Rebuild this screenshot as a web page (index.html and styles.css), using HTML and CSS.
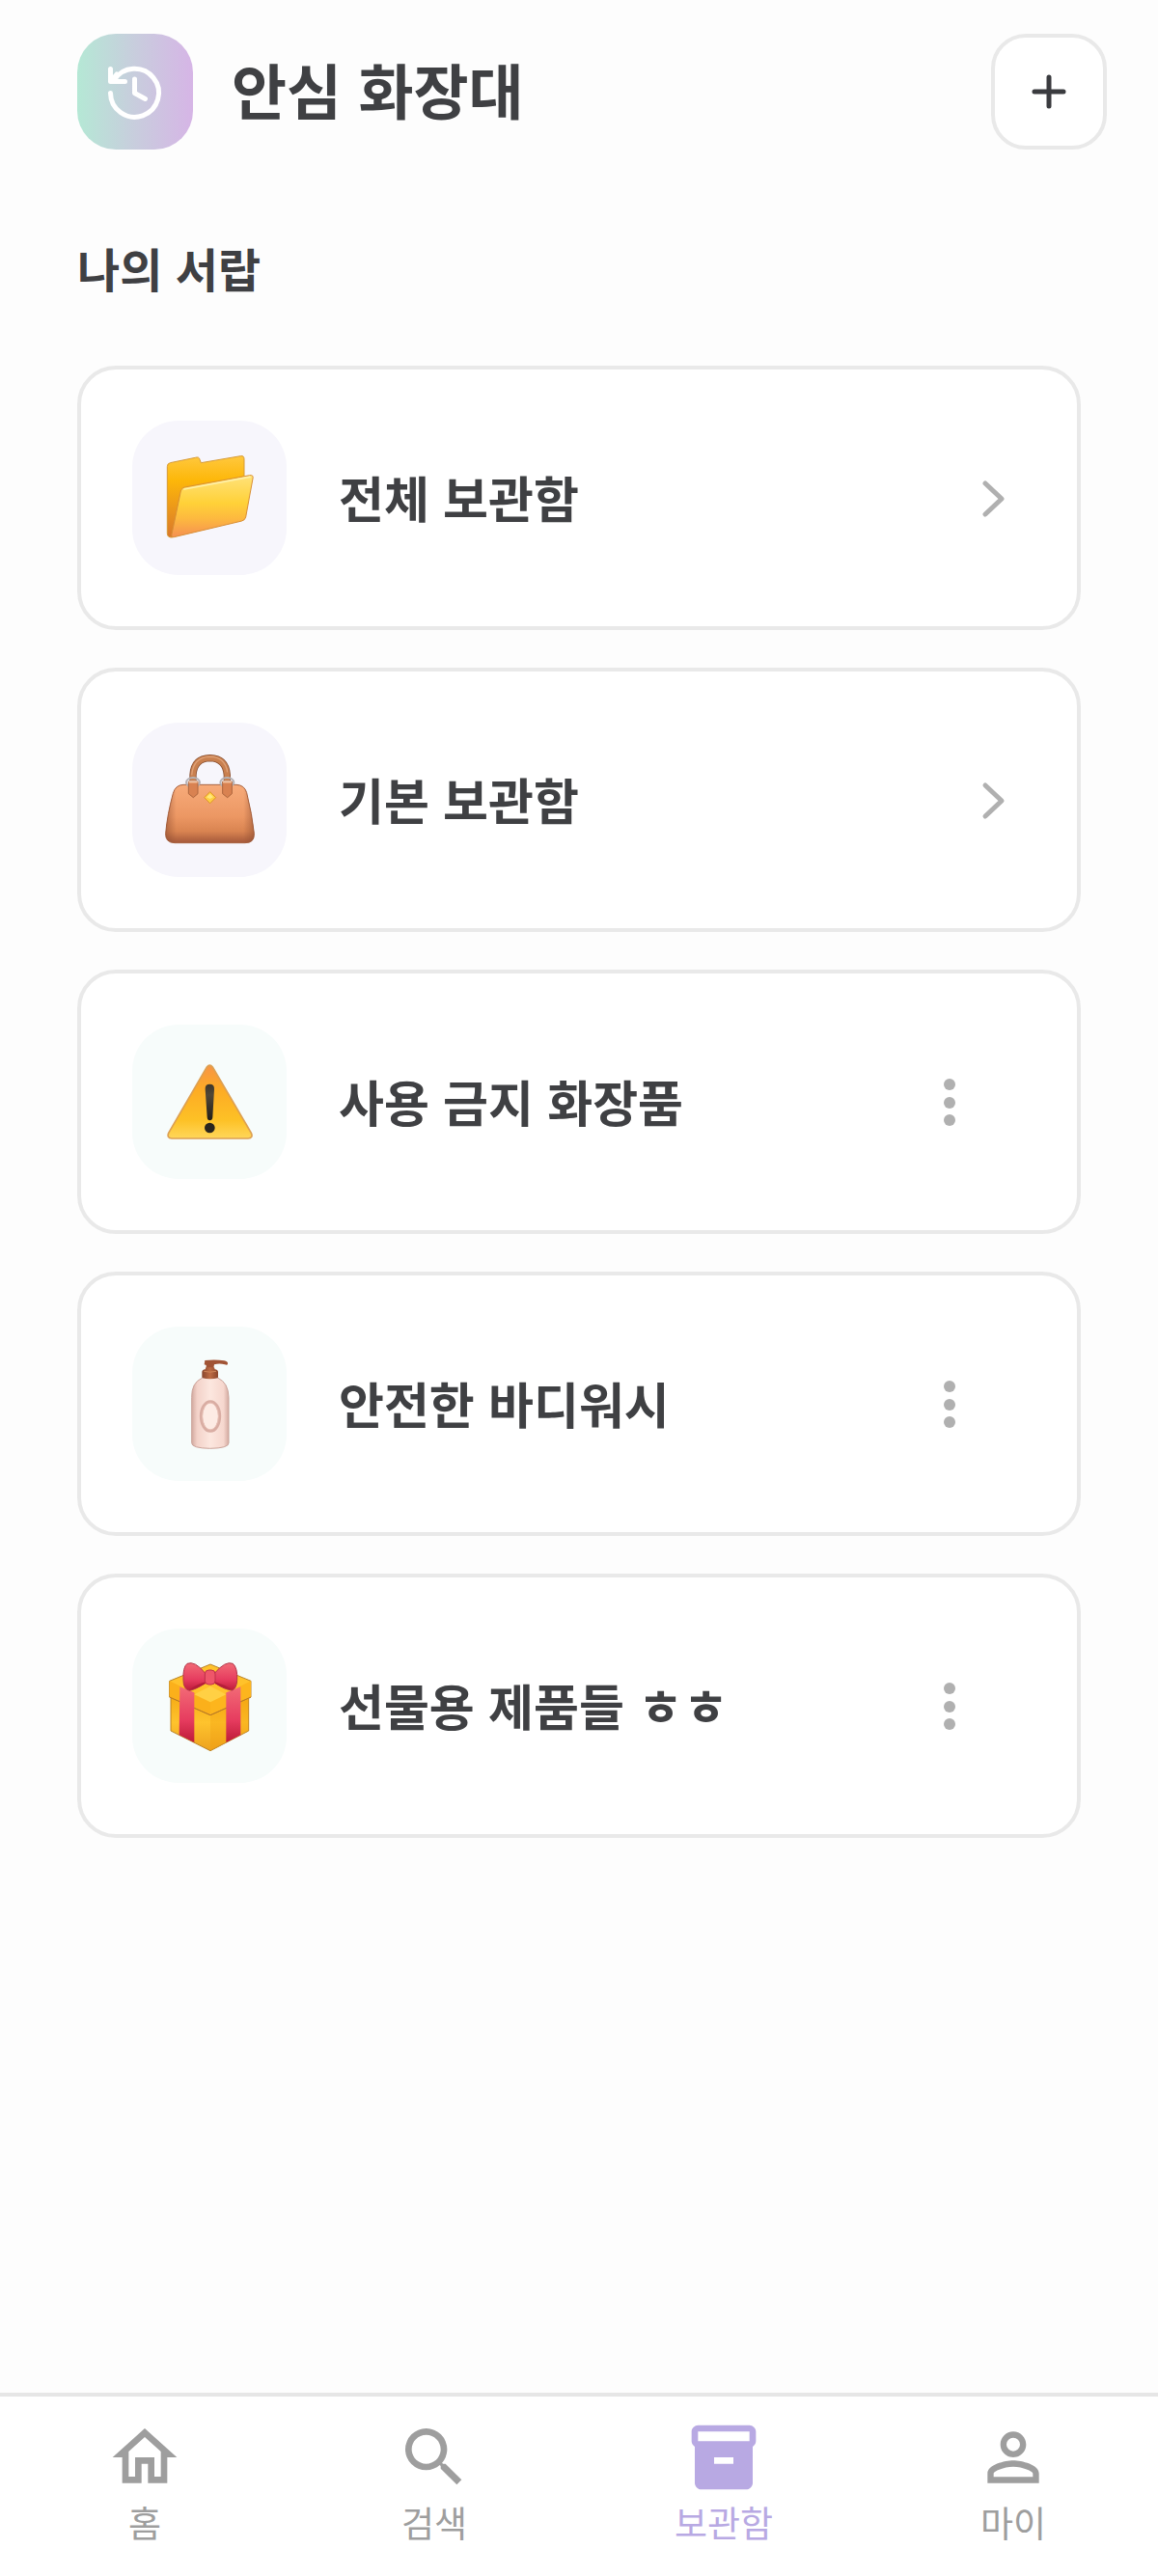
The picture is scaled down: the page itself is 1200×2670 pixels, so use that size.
FILE: index.html
```html
<!DOCTYPE html>
<html lang="ko">
<head>
    <meta charset="UTF-8">
    <meta name="viewport" content="width=device-width, initial-scale=1.0">
    <title>안심 화장대</title>
    <link rel="stylesheet" href="styles.css">
</head>
<body>
    <header class="header">
        <button class="history-button" type="button" aria-label="기록">
            <svg width="72" height="72" viewBox="0 0 72 72" fill="none" stroke="#fff" stroke-width="5" stroke-linecap="round" stroke-linejoin="round">
                <path d="M10.5 37.5A25 25 0 1 0 14.3 24"/>
                <path d="M10.5 12.5V25.5H25.5M12 24l5-6"/>
                <path d="M35.5 23V37.5L46.5 43.5"/>
            </svg>
        </button>
        <h1 class="title">안심 화장대</h1>
        <button class="add-button" type="button" aria-label="추가">
            <svg width="36" height="36" viewBox="0 0 36 36" fill="none" stroke="#3a3b3f" stroke-width="5" stroke-linecap="round">
                <path d="M18 3v30M3 18h30"/>
            </svg>
        </button>
    </header>

    <main class="content">
        <h2 class="section-title">나의 서랍</h2>
        <ul class="drawer-list">
            <li class="card">
                <a class="card-link" href="#all">
                    <span class="card-icon">
                        <svg viewBox="0 0 480 480">
                            <defs>
                                <linearGradient id="folder-back" x1="0" y1="0" x2="0" y2="1">
                                    <stop offset="0" stop-color="#ffc83e"/>
                                    <stop offset=".3" stop-color="#fdb709"/>
                                    <stop offset="1" stop-color="#d9772c"/>
                                </linearGradient>
                                <linearGradient id="folder-front" x1="0" y1="0" x2="0" y2="1">
                                    <stop offset="0" stop-color="#ffe27a"/>
                                    <stop offset=".45" stop-color="#ffd138"/>
                                    <stop offset=".7" stop-color="#fdb93f"/>
                                    <stop offset="1" stop-color="#f59052"/>
                                </linearGradient>
                            </defs>
                            <path d="M118 131L196 115Q208 111 210 121L214 131L337 110Q348 108 348 120V230L124 363Q109 364 109 350V143Q109 133 118 131Z" fill="url(#folder-back)" stroke="#d79a35" stroke-width="3"/>
                            <path d="M163 207L365 170Q378 168 375 180L353 300Q351 309 341 312L130 362Q121 364 123 353L151 219Q153 209 163 207Z" fill="url(#folder-front)" stroke="#d98f35" stroke-width="3"/>
                            <path d="M162 213L366 175" fill="none" stroke="#fff0a8" stroke-width="5" stroke-linecap="round"/>
                        </svg>
                    </span>
                    <span class="card-name">전체 보관함</span>
                    <svg class="chevron" width="66" height="66" viewBox="0 0 66 66" fill="none" stroke="#b0b0b0" stroke-width="5" stroke-linecap="round" stroke-linejoin="round">
                        <path d="M24 18L41 34L24 50"/>
                    </svg>
                </a>
            </li>
            <li class="card">
                <a class="card-link" href="#basic">
                    <span class="card-icon">
                        <svg viewBox="21 24 480 480">
                            <defs>
                                <linearGradient id="bag-body" x1="0" y1="0" x2="0" y2="1">
                                    <stop offset="0" stop-color="#f7ab7a"/>
                                    <stop offset=".55" stop-color="#ec9763"/>
                                    <stop offset=".8" stop-color="#d98451"/>
                                    <stop offset="1" stop-color="#a4583a"/>
                                </linearGradient>
                                <linearGradient id="bag-side" x1="0" y1="0" x2="1" y2="0">
                                    <stop offset="0" stop-color="#8a4a30" stop-opacity=".5"/>
                                    <stop offset=".12" stop-color="#8a4a30" stop-opacity="0"/>
                                    <stop offset=".88" stop-color="#8a4a30" stop-opacity="0"/>
                                    <stop offset="1" stop-color="#8a4a30" stop-opacity=".5"/>
                                </linearGradient>
                            </defs>
                            <path d="M180 217H345Q370 218 377 242Q394 310 400 368Q402 398 372 398H153Q123 397 125 368Q130 310 148 244Q155 218 180 217Z" fill="url(#bag-body)" stroke="#a8623f" stroke-width="3"/>
                            <path d="M180 217H345Q370 218 377 242Q394 310 400 368Q402 398 372 398H153Q123 397 125 368Q130 310 148 244Q155 218 180 217Z" fill="url(#bag-side)"/>
                            <path d="M210 204V187Q213 135 263 134Q312 135 316 187V204" fill="none" stroke="#8b5234" stroke-width="22"/>
                            <path d="M210 204V187Q213 135 263 134Q312 135 316 187V204" fill="none" stroke="#c9804f" stroke-width="17"/>
                            <path d="M206 187Q211 131 263 130Q310 131 317 178" fill="none" stroke="#dfa177" stroke-width="4"/>
                            <g fill="none" stroke="#b5b2b5" stroke-width="6">
                                <ellipse cx="210" cy="210" rx="21" ry="15"/>
                                <ellipse cx="316" cy="210" rx="21" ry="15"/>
                            </g>
                            <g fill="#d98251" stroke="#ad663e" stroke-width="3">
                                <path d="M196 207H225V245L211 257L196 245Z"/>
                                <path d="M302 207H331V245L317 257L302 245Z"/>
                            </g>
                            <path d="M197 209H224M303 209H330" stroke="#f2c09b" stroke-width="5"/>
                            <path d="M263 239L281 257L263 275L245 257Z" fill="#ffce43" stroke="#dc9428" stroke-width="3" stroke-linejoin="round"/>
                            <path d="M263 245L273 256L263 261L252 256Z" fill="#ffe77c"/>
                        </svg>
                    </span>
                    <span class="card-name">기본 보관함</span>
                    <svg class="chevron" width="66" height="66" viewBox="0 0 66 66" fill="none" stroke="#b0b0b0" stroke-width="5" stroke-linecap="round" stroke-linejoin="round">
                        <path d="M24 18L41 34L24 50"/>
                    </svg>
                </a>
            </li>
            <li class="card">
                <a class="card-link" href="#banned">
                    <span class="card-icon mint">
                        <svg viewBox="21 21 480 480">
                            <defs>
                                <linearGradient id="warning" x1="0" y1="0" x2="0" y2="1">
                                    <stop offset="0" stop-color="#f79545"/>
                                    <stop offset=".35" stop-color="#fdac24"/>
                                    <stop offset=".75" stop-color="#fdc126"/>
                                    <stop offset="1" stop-color="#ffd75a"/>
                                </linearGradient>
                                <linearGradient id="mark" x1="0" y1="0" x2="0" y2="1">
                                    <stop offset="0" stop-color="#3c352b"/>
                                    <stop offset=".3" stop-color="#514737"/>
                                    <stop offset="1" stop-color="#211e19"/>
                                </linearGradient>
                            </defs>
                            <path d="M253 153Q262 142 271 153L391 358Q398 374 381 375H144Q128 374 134 358Z" fill="url(#warning)" stroke="#dda052" stroke-width="5"/>
                            <path d="M248 222Q247 206 262 206Q277 206 276 222L271 309Q270 319 262 319Q255 319 254 309Z" fill="url(#mark)"/>
                            <circle cx="262" cy="342" r="16" fill="#29251e"/>
                        </svg>
                    </span>
                    <span class="card-name">사용 금지 화장품</span>
                </a>
                <button class="more-button" type="button" aria-label="사용 금지 화장품 메뉴">
                    <svg width="48" height="50" viewBox="0 0 48 50" fill="#b0b0b0">
                        <circle cx="24" cy="7" r="6"/><circle cx="24" cy="26" r="6"/><circle cx="24" cy="44" r="6"/>
                    </svg>
                </button>
            </li>
            <li class="card">
                <a class="card-link" href="#bodywash">
                    <span class="card-icon mint">
                        <svg viewBox="21 24 480 480">
                            <defs>
                                <linearGradient id="bottle" x1="0" y1="0" x2="1" y2="0">
                                    <stop offset="0" stop-color="#d3aaa0"/>
                                    <stop offset=".15" stop-color="#f3d2c9"/>
                                    <stop offset=".5" stop-color="#fce7df"/>
                                    <stop offset=".86" stop-color="#f6d7ce"/>
                                    <stop offset="1" stop-color="#d4aca2"/>
                                </linearGradient>
                                <linearGradient id="cap" x1="0" y1="0" x2="1" y2="0">
                                    <stop offset="0" stop-color="#87452d"/>
                                    <stop offset=".5" stop-color="#bd6b44"/>
                                    <stop offset="1" stop-color="#8b452b"/>
                                </linearGradient>
                            </defs>
                            <path d="M238 184Q205 199 206 244V386Q206 402 263 403Q321 402 321 386V244Q320 199 288 184Z" fill="url(#bottle)" stroke="#cba39a" stroke-width="3"/>
                            <path d="M247 129Q282 126 307 130Q319 132 318 140Q317 145 309 142Q292 137 276 142L274 153H251V144L245 142Z" fill="#a15435"/>
                            <path d="M250 151H276L278 157Q288 158 288 166V182Q263 191 238 182V166Q238 158 248 157Z" fill="url(#cap)"/>
                            <path d="M244 163Q263 168 282 163" fill="none" stroke="#d08659" stroke-width="3"/>
                            <ellipse cx="264" cy="303" rx="29" ry="46" fill="#fdebe4" stroke="#d9ada3" stroke-width="9"/>
                            <ellipse cx="264" cy="303" rx="25" ry="42" fill="none" stroke="#e8c0b5" stroke-width="3"/>
                        </svg>
                    </span>
                    <span class="card-name">안전한 바디워시</span>
                </a>
                <button class="more-button" type="button" aria-label="안전한 바디워시 메뉴">
                    <svg width="48" height="50" viewBox="0 0 48 50" fill="#b0b0b0">
                        <circle cx="24" cy="7" r="6"/><circle cx="24" cy="26" r="6"/><circle cx="24" cy="44" r="6"/>
                    </svg>
                </button>
            </li>
            <li class="card">
                <a class="card-link" href="#gift">
                    <span class="card-icon mint">
                        <svg viewBox="21 21 480 480">
                            <defs>
                                <linearGradient id="box" x1="0" y1="0" x2="0" y2="1">
                                    <stop offset="0" stop-color="#f5a915"/>
                                    <stop offset=".5" stop-color="#fec32d"/>
                                    <stop offset="1" stop-color="#eda21e"/>
                                </linearGradient>
                                <linearGradient id="ribbon" x1="0" y1="0" x2="0" y2="1">
                                    <stop offset="0" stop-color="#f26a76"/>
                                    <stop offset=".6" stop-color="#e63c5f"/>
                                    <stop offset="1" stop-color="#bd1a38"/>
                                </linearGradient>
                            </defs>
                            <path d="M141 225L264 270L383 225V339L264 401L141 339Z" fill="url(#box)" stroke="#b98328" stroke-width="3" stroke-linejoin="round"/>
                            <path d="M264 282L383 238V339L264 401Z" fill="#f39c0b" opacity=".3"/>
                            <path d="M137 184L264 132L390 184V234L264 290L137 234Z" fill="#ffc22b" stroke="#b98328" stroke-width="3" stroke-linejoin="round"/>
                            <path d="M137 184L264 246V288L137 234Z" fill="#fbb01b"/>
                            <path d="M264 246L390 184V234L264 288Z" fill="#fdb51d"/>
                            <path d="M214 226L264 200L313 226L264 250Z" fill="#ffd044"/>
                            <path d="M137 234L264 290L390 234" fill="none" stroke="#ba7824" stroke-width="3"/>
                            <path d="M169 202L214 220V375L167 352ZM313 220L358 202V352L313 375Z" fill="url(#ribbon)"/>
                            <path d="M248 160Q216 120 192 130Q178 141 180 181Q180 210 199 214Q219 210 249 190ZM277 160Q311 120 334 130Q349 143 347 181Q346 208 331 213Q309 211 278 190Z" fill="url(#ribbon)" stroke="#b23548" stroke-width="3"/>
                            <path d="M249 187Q219 195 198 212Q218 210 249 192ZM278 187Q309 196 332 211Q307 209 278 192Z" fill="#b51e3a"/>
                            <rect x="247" y="150" width="32" height="45" rx="12" fill="#ef5669" stroke="#bf3048" stroke-width="3"/>
                        </svg>
                    </span>
                    <span class="card-name">선물용 제품들 ㅎㅎ</span>
                </a>
                <button class="more-button" type="button" aria-label="선물용 제품들 메뉴">
                    <svg width="48" height="50" viewBox="0 0 48 50" fill="#b0b0b0">
                        <circle cx="24" cy="7" r="6"/><circle cx="24" cy="26" r="6"/><circle cx="24" cy="44" r="6"/>
                    </svg>
                </button>
            </li>
        </ul>
    </main>

    <nav class="tab-bar">
        <a class="tab" href="#home">
            <svg viewBox="0 0 24 24"><path d="M12 5.69l5 4.5V18h-2v-6H9v6H7v-7.81l5-4.5M12 3L2 12h3v8h6v-6h2v6h6v-8h3L12 3z"/></svg>
            <span>홈</span>
        </a>
        <a class="tab" href="#search">
            <svg viewBox="0 0 24 24"><path d="M15.5 14h-.79l-.28-.27A6.471 6.471 0 0 0 16 9.5 6.5 6.5 0 1 0 9.5 16c1.61 0 3.09-.59 4.23-1.57l.27.28v.79l5 4.99L20.49 19l-4.99-5zm-6 0C7.01 14 5 11.99 5 9.5S7.01 5 9.5 5 14 7.01 14 9.5 11.99 14 9.5 14z"/></svg>
            <span>검색</span>
        </a>
        <a class="tab active" href="#storage" aria-current="page">
            <svg viewBox="0 0 24 24"><path d="M20 2H4c-1 0-2 .9-2 2v3.01c0 .72.43 1.34 1 1.69V20c0 1.1 1.1 2 2 2h14c.9 0 2-.9 2-2V8.7c.57-.35 1-.97 1-1.69V4c0-1.1-1-2-2-2zm-5 12H9v-2h6v2zm5-7H4V4h16v3z" fill-rule="evenodd"/></svg>
            <span>보관함</span>
        </a>
        <a class="tab" href="#my">
            <svg viewBox="0 0 24 24"><path d="M12 5.9a2.1 2.1 0 1 1 0 4.2 2.1 2.1 0 0 1 0-4.2m0 9c2.97 0 6.1 1.46 6.1 2.1v1.1H5.9V17c0-.64 3.13-2.1 6.1-2.1M12 4C9.79 4 8 5.79 8 8s1.79 4 4 4 4-1.79 4-4-1.79-4-4-4zm0 9c-2.67 0-8 1.34-8 4v3h16v-3c0-2.66-5.33-4-8-4z"/></svg>
            <span>마이</span>
        </a>
    </nav>
</body>
</html>
```

FILE: styles.css
```css
* {
    box-sizing: border-box;
}

body {
    font-family: "Noto Sans CJK KR", "Noto Sans", sans-serif;
    display: flex;
    flex-direction: column;
    min-height: 100vh;
    background-color: #fdfdfd;
    color: #3f4043;
    margin: 0;
}

button {
    border: none;
    padding: 0;
    background: none;
    cursor: pointer;
}

a {
    color: inherit;
    text-decoration: none;
}

svg {
    display: block;
}

.header {
    display: flex;
    align-items: center;
    gap: 40px;
    padding: 35px 53px 0 80px;
}

.history-button,
.add-button {
    display: flex;
    justify-content: center;
    align-items: center;
    flex-shrink: 0;
    width: 120px;
    height: 120px;
    border-radius: 40px;
}

.history-button {
    background: linear-gradient(90deg, #b5e8d5, #c8cddd 50%, #d6b5e6);
}

.add-button {
    background: #fff;
    border: 4px solid #e9e9e9;
    border-radius: 36px;
}

.title {
    flex: 1;
    font-size: 62px;
    line-height: 80px;
    font-weight: 700;
    margin: 0;
    padding-bottom: 6px;
}

.content {
    flex: 1;
    padding: 90px 80px 40px;
}

.section-title {
    font-size: 48px;
    line-height: 64px;
    font-weight: 700;
    margin: 0 0 70px;
}

.drawer-list {
    display: flex;
    flex-direction: column;
    gap: 39px;
    list-style: none;
    margin: 0;
    padding: 0;
}

.card {
    display: flex;
    align-items: center;
    background: #fff;
    border: 4px solid #e9e9e9;
    border-radius: 40px;
    padding: 53px;
}

.card-link {
    display: flex;
    flex: 1;
    align-items: center;
    gap: 54px;
}

.card-icon {
    flex-shrink: 0;
    width: 160px;
    height: 160px;
    border-radius: 48px;
    background: #f7f6fc;
}

.card-icon.mint {
    background: #f7fcfb;
}

.card-name {
    flex: 1;
    font-size: 51px;
    line-height: 64px;
    font-weight: 700;
    padding-bottom: 2px;
}

.more-button {
    display: flex;
    justify-content: center;
    align-items: center;
    width: 80px;
    height: 80px;
    margin-right: 39px;
}

.tab-bar {
    position: sticky;
    bottom: 0;
    display: flex;
    background: #fff;
    border-top: 4px solid #e6e6e6;
}

.tab {
    display: flex;
    flex: 1;
    flex-direction: column;
    align-items: center;
    height: 186px;
    padding-top: 23px;
    color: #9e9e9e;
    font-size: 37px;
    line-height: 54px;
}

.tab svg {
    width: 80px;
    height: 80px;
    fill: currentColor;
}

.tab.active {
    color: #b8a9e3;
}
```
